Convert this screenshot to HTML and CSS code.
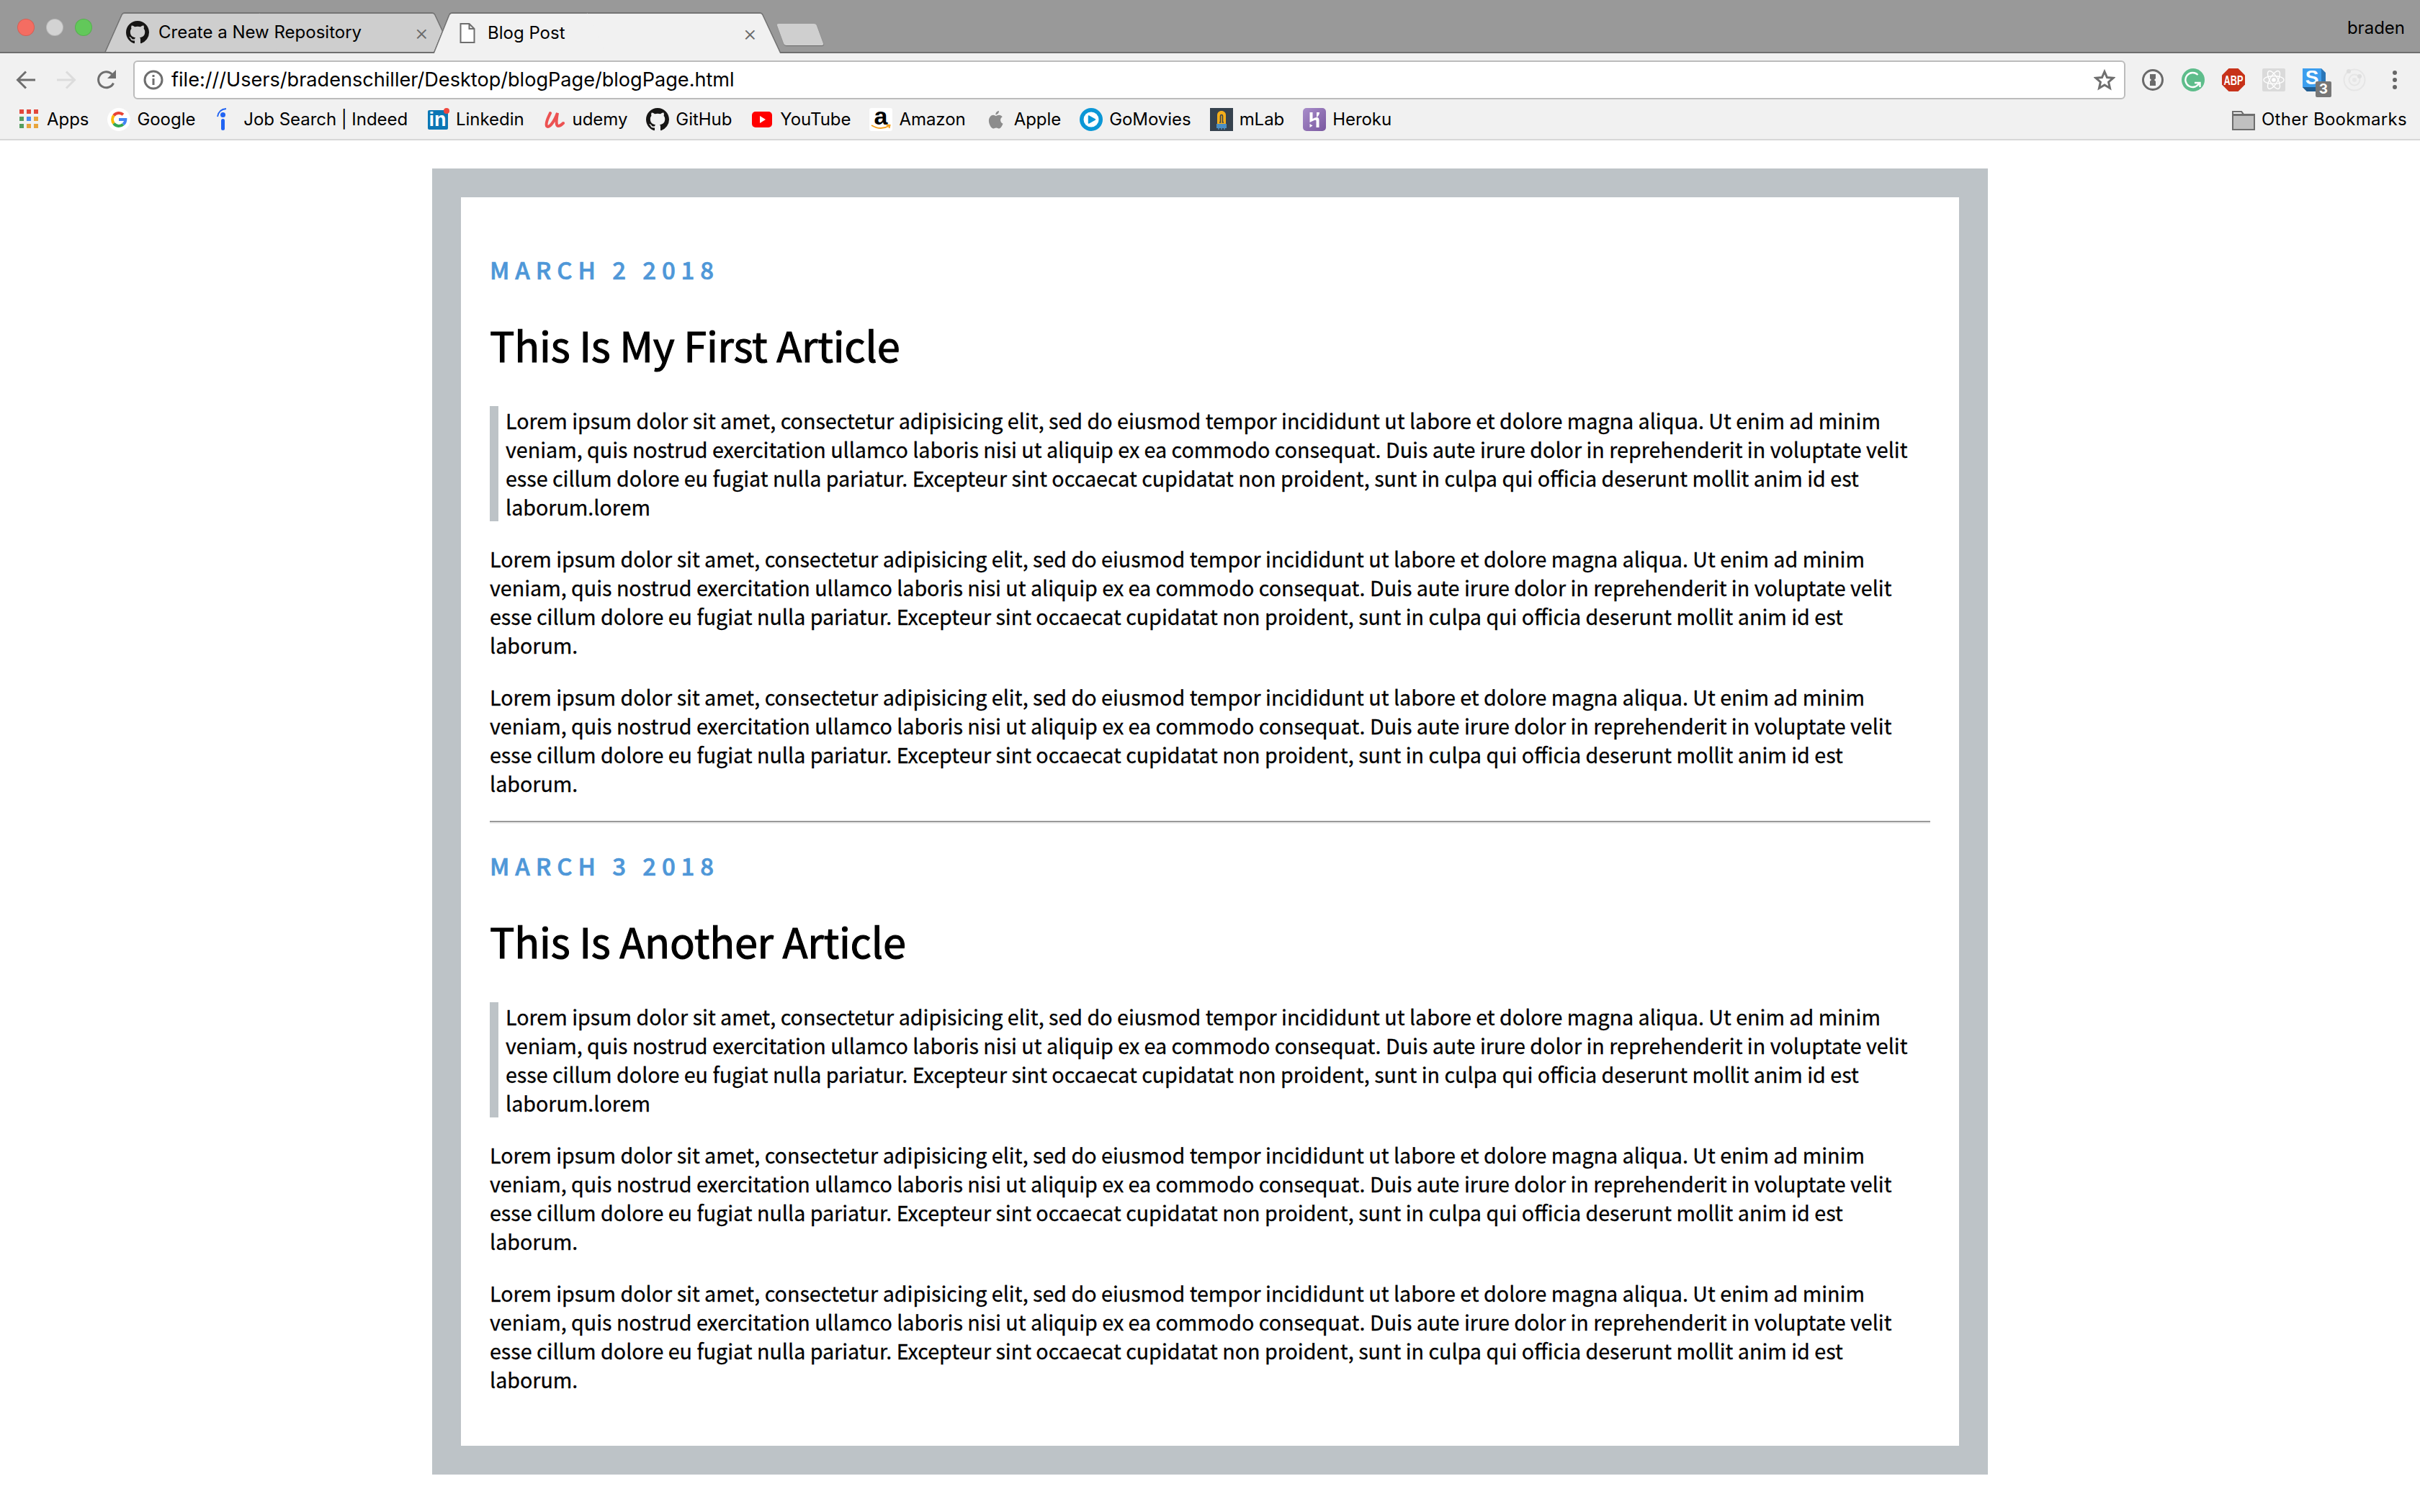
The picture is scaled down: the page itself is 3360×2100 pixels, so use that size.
FILE: index.html
```html
<!DOCTYPE html>
<html lang="en">
  <head>
    <meta charset="UTF-8" />
    <title>Blog Post</title>
    <link rel="stylesheet" href="styles.css">
  </head>
  <body>
    <svg class="defs" width="0" height="0">
      <defs>
        <linearGradient id="herokuFill" x1="0" y1="0" x2="1" y2="1">
          <stop offset="0" stop-color="#a88dca"/>
          <stop offset="1" stop-color="#79579f"/>
        </linearGradient>
      </defs>
      <symbol id="github" viewBox="0 0 16 16">
        <path fill="#161514" d="M8 0C3.58 0 0 3.58 0 8c0 3.54 2.29 6.53 5.47 7.59.4.07.55-.17.55-.38 0-.19-.01-.82-.01-1.49-2.01.37-2.53-.49-2.69-.94-.09-.23-.48-.94-.82-1.13-.28-.15-.68-.52-.01-.53.63-.01 1.08.58 1.23.82.72 1.21 1.87.87 2.33.66.07-.52.28-.87.51-1.07-1.78-.2-3.64-.89-3.64-3.95 0-.87.31-1.59.82-2.15-.08-.2-.36-1.02.08-2.12 0 0 .67-.21 2.2.82.64-.18 1.32-.27 2-.27.68 0 1.36.09 2 .27 1.53-1.04 2.2-.82 2.2-.82.44 1.1.16 1.92.08 2.12.51.56.82 1.27.82 2.15 0 3.07-1.87 3.75-3.65 3.95.29.25.54.73.54 1.48 0 1.07-.01 1.93-.01 2.2 0 .21.15.46.55.38A8.013 8.013 0 0016 8c0-4.42-3.58-8-8-8z"/>
      </symbol>
    </svg>

    <div class="browser">
      <div class="tabbar">
        <div class="lights">
          <span class="light red"></span>
          <span class="light grey"></span>
          <span class="light green"></span>
        </div>
        <div class="tab">
          <svg class="ico"><use href="#github"/></svg>
          <span class="tab-title">Create a New Repository</span>
          <span class="tab-close">×</span>
        </div>
        <div class="tab active">
          <svg class="ico doc" viewBox="0 0 22 28">
            <path fill="#fff" stroke="#6e6e6e" stroke-width="2" d="M1.5 1h12l7 7v19h-19zM13.5 1v7h7"/>
          </svg>
          <span class="tab-title">Blog Post</span>
          <span class="tab-close">×</span>
        </div>
        <div class="newtab"></div>
        <span class="user">braden</span>
      </div>

      <div class="toolbar">
        <svg class="nav" viewBox="0 0 28 28"><path fill="none" stroke="#6e6e6e" stroke-width="3" d="M27 14H3M14 2.500 2.500 14 14 25.500"/></svg>
        <svg class="nav" viewBox="0 0 28 28"><path fill="none" stroke="#dcdcdc" stroke-width="3" d="M1 14h24M14 2.500 25.500 14 14 25.500"/></svg>
        <svg class="nav" viewBox="0 0 28 28"><path fill="none" stroke="#6e6e6e" stroke-width="3" d="M23.500 18.500A11 11 0 1 1 21.500 6"/><path fill="#6e6e6e" d="M27 0v12H15z"/></svg>
        <div class="omnibox">
          <svg class="info" viewBox="0 0 28 28">
            <circle cx="14" cy="14" r="12" fill="none" stroke="#6e6e6e" stroke-width="3"/>
            <rect x="12.500" y="12" width="3" height="9" fill="#6e6e6e"/>
            <rect x="12.500" y="7" width="3" height="3" fill="#6e6e6e"/>
          </svg>
          <span class="url">file:///Users/bradenschiller/Desktop/blogPage/blogPage.html</span>
          <svg class="star" viewBox="0 0 30 30"><path fill="none" stroke="#6e6e6e" stroke-width="3" d="M15 3.500l3.500 8 8.500.8-6.400 5.700 1.900 8.500L15 22l-7.500 4.500 1.900-8.500L3 12.300l8.500-.8z"/></svg>
        </div>
        <div class="extensions">
          <svg class="ext" viewBox="0 0 32 32">
            <circle cx="16" cy="16" r="13.500" fill="#f4f4f4" stroke="#6a6a6a" stroke-width="3"/>
            <path fill="#6a6a6a" d="M12 8h8v6l-2 2 2 2v6h-8v-6l2-2-2-2z"/>
          </svg>
          <svg class="ext" viewBox="0 0 32 32">
            <circle cx="16" cy="16" r="16" fill="#5ebd8b"/>
            <path fill="none" stroke="#fff" stroke-width="2.400" d="M22.500 9A10 10 0 1 0 24.500 20"/>
            <path fill="none" stroke="#fff" stroke-width="2.400" d="M18 20h7.500v6"/>
          </svg>
          <svg class="ext" viewBox="0 0 32 32">
            <path fill="#c7321a" d="M9.500 0h13L32 9.500v13L22.500 32h-13L0 22.500v-13z"/>
            <text class="abp" x="2.500" y="22.500" textLength="27" lengthAdjust="spacingAndGlyphs">ABP</text>
          </svg>
          <svg class="ext" viewBox="0 0 32 32">
            <rect width="32" height="32" rx="2" fill="#dadada"/>
            <g fill="none" stroke="#fff" stroke-width="1.400">
              <ellipse cx="16" cy="16" rx="14" ry="5.500"/>
              <ellipse cx="16" cy="16" rx="14" ry="5.500" transform="rotate(60 16 16)"/>
              <ellipse cx="16" cy="16" rx="14" ry="5.500" transform="rotate(120 16 16)"/>
            </g>
            <circle cx="16" cy="16" r="2.800" fill="#fff"/>
          </svg>
          <div class="ext ext-stack">
            <svg class="ext" viewBox="0 0 32 32">
              <path fill="#2a76b8" d="M26 0l6 6v26H6l-6-6z"/>
              <path fill="#225e92" d="M0 26h26l6 6H6z"/>
              <rect width="26" height="26" fill="#3d9eee"/>
              <text class="slack-s" x="13" y="22" text-anchor="middle">S</text>
            </svg>
            <span class="badge">3</span>
          </div>
          <svg class="ext" viewBox="0 0 32 32">
            <g fill="none" stroke="#e6e6e6" stroke-width="2">
              <circle cx="16" cy="16" r="14.500"/>
              <circle cx="16" cy="16" r="7.500"/>
            </g>
            <circle cx="16" cy="16" r="3" fill="#e6e6e6"/>
            <circle cx="8" cy="4" r="3" fill="#dedede"/>
            <circle cx="23" cy="11" r="3" fill="#dedede"/>
          </svg>
          <div class="menu-dots"><i></i><i></i><i></i></div>
        </div>
      </div>

      <div class="bookmarks">
        <a class="bm">
          <svg class="ico" viewBox="0 0 32 32">
            <rect x="3" y="2" width="6" height="6" fill="#e2473b"/><rect x="13" y="2" width="6" height="6" fill="#e2473b"/><rect x="23" y="2" width="6" height="6" fill="#e2473b"/>
            <rect x="3" y="12" width="6" height="6" fill="#559e60"/><rect x="13" y="12" width="6" height="6" fill="#4a8cf0"/><rect x="23" y="12" width="6" height="6" fill="#e8a53c"/>
            <rect x="3" y="22" width="6" height="6" fill="#559e60"/><rect x="13" y="22" width="6" height="6" fill="#e8a53c"/><rect x="23" y="22" width="6" height="6" fill="#e8a53c"/>
          </svg>
          Apps
        </a>
        <a class="bm">
          <svg class="ico" viewBox="0 0 32 32">
            <circle cx="16" cy="16" r="16" fill="#fff"/>
            <path fill="none" stroke="#e94435" stroke-width="4" d="M9 10.500a9 9 0 0 1 13-1.200"/>
            <path fill="none" stroke="#fabb05" stroke-width="4" d="M9 10.500a9 9 0 0 0 0 11"/>
            <path fill="none" stroke="#34a853" stroke-width="4" d="M9 21.500a9 9 0 0 0 13 1.200"/>
            <path fill="none" stroke="#4285f4" stroke-width="4" d="M22 22.700c2.300-1.700 3.300-4.200 3.300-6.700H16"/>
          </svg>
          Google
        </a>
        <a class="bm">
          <svg class="ico" viewBox="0 0 32 32">
            <path fill="none" stroke="#2164f3" stroke-width="1.800" d="M5 12C6 6 10 1.500 17 1"/>
            <circle cx="12.500" cy="9.500" r="3.500" fill="#2164f3"/>
            <rect x="10" y="15" width="5" height="16" rx="2.500" fill="#2164f3"/>
          </svg>
          Job Search | Indeed
        </a>
        <a class="bm">
          <svg class="ico" viewBox="0 0 32 32">
            <rect x="2" y="3" width="28" height="27" rx="2" fill="#0b76b4"/>
            <text class="li" x="15.500" y="25" text-anchor="middle">in</text>
            <circle cx="28" cy="4" r="4" fill="#f0473e"/>
          </svg>
          Linkedin
        </a>
        <a class="bm">
          <svg class="ico" viewBox="0 0 32 32">
            <path fill="none" stroke="#ec5252" stroke-width="4" stroke-linecap="round" d="M10 7C8 12 3 20 5 25 8 29 15 20 20 7 19 13 17 25 21 25 24 25 26 23 28 21"/>
          </svg>
          udemy
        </a>
        <a class="bm">
          <svg class="ico"><use href="#github"/></svg>
          GitHub
        </a>
        <a class="bm">
          <svg class="ico" viewBox="0 0 32 32">
            <rect x="2" y="5" width="28" height="22" rx="5" fill="#f00"/>
            <path fill="#fff" d="M13 11l8 5-8 5z"/>
          </svg>
          YouTube
        </a>
        <a class="bm">
          <svg class="ico" viewBox="0 0 32 32">
            <rect width="32" height="32" rx="3" fill="#fff"/>
            <text class="amz" x="16" y="22.500" text-anchor="middle">a</text>
            <path fill="none" stroke="#f6a11d" stroke-width="2" d="M3 24c8 5 17 5 24 1M23.500 23.500l5 .5-1 4"/>
          </svg>
          Amazon
        </a>
        <a class="bm">
          <svg class="ico" viewBox="0 0 32 32">
            <path fill="#8c8c8c" transform="translate(1.500 3) scale(.88)" d="M21 1c.3 3-2.300 6-5.200 6-.4-2.900 2.300-5.700 5.200-6zM16 9c1.500 0 3-1.200 5.200-1.200 2 0 4 1 5.200 2.800-4.500 2.500-3.800 9 .9 10.700-1 2.700-3.500 7.700-6 7.700-1.800 0-2.500-1.200-4.600-1.200s-3 1.200-4.600 1.200C9 29 5 22 5 17c0-5.500 3.500-9.200 7-9.200 1.700 0 3 1.200 4 1.200z"/>
          </svg>
          Apple
        </a>
        <a class="bm">
          <svg class="ico" viewBox="0 0 32 32">
            <circle cx="16" cy="16" r="16" fill="#0b97d6"/>
            <circle cx="16" cy="16" r="10.500" fill="#fff"/>
            <path fill="#0b97d6" stroke="#0b97d6" stroke-width="1.500" stroke-linejoin="round" d="M12.500 11l9 5-9 5z"/>
          </svg>
          GoMovies
        </a>
        <a class="bm">
          <svg class="ico" viewBox="0 0 32 32">
            <rect width="32" height="32" fill="#36424e"/>
            <path fill="#f5ae1b" d="M10 22V10c0-3.500 2.500-6 6-6s6 2.500 6 6v12z"/>
            <path fill="none" stroke="#36424e" stroke-width="1.500" d="M13 20h1.500v-9c0-2 3-2 3 0v9H19"/>
            <rect x="9" y="22" width="14" height="6" fill="#4b8fc4"/>
            <path stroke="#4b8fc4" stroke-width="1.500" d="M12 28v2M16 28v2M20 28v2"/>
          </svg>
          mLab
        </a>
        <a class="bm">
          <svg class="ico" viewBox="0 0 32 32">
            <rect width="32" height="32" rx="5" fill="url(#herokuFill)"/>
            <path fill="#fff" d="M9.500 6h4v9c3-1.500 6-2.500 7.500-1.500 1.500 1 1.500 2.500 1.500 4V27h-4v-9c0-1-.5-1.500-1.500-1.300-1.500.3-3.500 1.300-3.500 1.300l-4 2zM9.500 27v-5l4 2.500zM19 6h4c0 3-1.500 5.500-4 7z"/>
          </svg>
          Heroku
        </a>
        <a class="bm other">
          <svg class="ico" viewBox="0 0 32 32">
            <path fill="#c0c0c0" stroke="#6e6e6e" stroke-width="2" d="M1 5h12l3 4h15v21H1z"/>
            <path fill="#f1f1f1" stroke="#6e6e6e" stroke-width="2" d="M1 9V5h12l3 4z"/>
            <path stroke="#6e6e6e" stroke-width="2" d="M1 10h30"/>
          </svg>
          Other Bookmarks
        </a>
      </div>
    </div>

    <main class="wrapper">
      <article class="post">
        <p class="post-date">March 2 2018</p>
        <h1 class="post-title">This Is My First Article</h1>
        <blockquote class="post-quote">Lorem ipsum dolor sit amet, consectetur adipisicing elit, sed do eiusmod tempor incididunt ut labore et dolore magna aliqua. Ut enim ad minim veniam, quis nostrud exercitation ullamco laboris nisi ut aliquip ex ea commodo consequat. Duis aute irure dolor in reprehenderit in voluptate velit esse cillum dolore eu fugiat nulla pariatur. Excepteur sint occaecat cupidatat non proident, sunt in culpa qui officia deserunt mollit anim id est laborum.lorem</blockquote>
        <p>Lorem ipsum dolor sit amet, consectetur adipisicing elit, sed do eiusmod tempor incididunt ut labore et dolore magna aliqua. Ut enim ad minim veniam, quis nostrud exercitation ullamco laboris nisi ut aliquip ex ea commodo consequat. Duis aute irure dolor in reprehenderit in voluptate velit esse cillum dolore eu fugiat nulla pariatur. Excepteur sint occaecat cupidatat non proident, sunt in culpa qui officia deserunt mollit anim id est laborum.</p>
        <p>Lorem ipsum dolor sit amet, consectetur adipisicing elit, sed do eiusmod tempor incididunt ut labore et dolore magna aliqua. Ut enim ad minim veniam, quis nostrud exercitation ullamco laboris nisi ut aliquip ex ea commodo consequat. Duis aute irure dolor in reprehenderit in voluptate velit esse cillum dolore eu fugiat nulla pariatur. Excepteur sint occaecat cupidatat non proident, sunt in culpa qui officia deserunt mollit anim id est laborum.</p>
      </article>
      <hr class="divider" />
      <article class="post">
        <p class="post-date">March 3 2018</p>
        <h1 class="post-title">This Is Another Article</h1>
        <blockquote class="post-quote">Lorem ipsum dolor sit amet, consectetur adipisicing elit, sed do eiusmod tempor incididunt ut labore et dolore magna aliqua. Ut enim ad minim veniam, quis nostrud exercitation ullamco laboris nisi ut aliquip ex ea commodo consequat. Duis aute irure dolor in reprehenderit in voluptate velit esse cillum dolore eu fugiat nulla pariatur. Excepteur sint occaecat cupidatat non proident, sunt in culpa qui officia deserunt mollit anim id est laborum.lorem</blockquote>
        <p>Lorem ipsum dolor sit amet, consectetur adipisicing elit, sed do eiusmod tempor incididunt ut labore et dolore magna aliqua. Ut enim ad minim veniam, quis nostrud exercitation ullamco laboris nisi ut aliquip ex ea commodo consequat. Duis aute irure dolor in reprehenderit in voluptate velit esse cillum dolore eu fugiat nulla pariatur. Excepteur sint occaecat cupidatat non proident, sunt in culpa qui officia deserunt mollit anim id est laborum.</p>
        <p>Lorem ipsum dolor sit amet, consectetur adipisicing elit, sed do eiusmod tempor incididunt ut labore et dolore magna aliqua. Ut enim ad minim veniam, quis nostrud exercitation ullamco laboris nisi ut aliquip ex ea commodo consequat. Duis aute irure dolor in reprehenderit in voluptate velit esse cillum dolore eu fugiat nulla pariatur. Excepteur sint occaecat cupidatat non proident, sunt in culpa qui officia deserunt mollit anim id est laborum.</p>
      </article>
    </main>
  </body>
</html>
```

FILE: styles.css
```css
* {
  box-sizing: border-box;
}

body {
  margin: 0;
  background: #fff;
  color: #000;
  font-family: 'Noto Sans CJK SC', 'Noto Sans', sans-serif;
  font-size: 28.65px;
  line-height: 40px;
  -webkit-text-stroke: 0.3px #000;
  overflow: hidden;
}

.defs {
  display: block;
  height: 0;
}

/* Browser chrome */
.browser {
  height: 195px;
  background: #f1f1f1;
  border-bottom: 2px solid #d8d8d8;
  font-family: 'Inter', sans-serif;
  font-size: 24px;
  line-height: 32px;
  color: #000;
  -webkit-text-stroke: 0;
}

.ico {
  width: 32px;
  height: 32px;
  flex: none;
  overflow: visible;
}

.tabbar {
  height: 74px;
  display: flex;
  align-items: flex-end;
  background: #999;
  border-bottom: 2px solid #6f6f6f;
  padding-left: 24px;
}

.lights {
  display: flex;
  gap: 16px;
  width: 121px;
  align-self: flex-start;
  padding-top: 26px;
}

.light {
  width: 24px;
  height: 24px;
  border-radius: 50%;
  border: 1px solid rgba(0, 0, 0, 0.12);
}
.light.red { background: #f46d62; }
.light.grey { background: #d3d3d3; }
.light.green { background: #62c85a; }

.tab {
  position: relative;
  width: 484px;
  height: 55px;
  display: flex;
  align-items: center;
  padding: 0 24px 0 30px;
}

.tab::before,
.tab::after {
  content: "";
  position: absolute;
  top: 0;
  bottom: 0;
  width: 50%;
  background: #cecece;
  border-top: 2px solid #747474;
  z-index: 0;
}
.tab::before {
  left: 0;
  border-left: 2px solid #747474;
  border-top-left-radius: 4px;
  transform: skewX(-24deg);
  transform-origin: bottom left;
}
.tab::after {
  right: 0;
  border-right: 2px solid #747474;
  border-top-right-radius: 4px;
  transform: skewX(25deg);
  transform-origin: bottom right;
}

.tab > * {
  position: relative;
  z-index: 1;
}

.tab.active {
  margin-left: -28px;
  margin-bottom: -2px;
  height: 57px;
  padding-left: 37px;
  z-index: 2;
}
.tab.active::before,
.tab.active::after {
  background: #f1f1f1;
}
.tab.active::before {
  transform: skewX(-22deg);
}

.tab-title {
  margin-left: 13px;
  flex: 1;
  white-space: nowrap;
}

.doc {
  width: 22px;
  height: 28px;
  margin-right: 4px;
}

.tab-close {
  color: #6a6a6a;
  font-size: 30px;
  font-weight: 300;
  line-height: 30px;
  margin-right: 10px;
}

.newtab {
  width: 55px;
  height: 30px;
  margin: 0 0 9px 4px;
  background: #cfcfcf;
  border-radius: 3px;
  transform: skewX(20deg);
  transform-origin: bottom left;
  box-shadow: 0 1px 1px rgba(0, 0, 0, 0.3);
}

.user {
  margin-left: auto;
  align-self: flex-start;
  padding: 23px 21px 0 0;
}

.toolbar {
  height: 64px;
  display: flex;
  align-items: center;
  padding: 9px 0 0 22px;
}

.nav {
  width: 28px;
  height: 28px;
  margin-right: 28px;
  flex: none;
}

.omnibox {
  width: 2766px;
  height: 54px;
  margin-left: -5px;
  display: flex;
  align-items: center;
  background: #fff;
  border: 2px solid #bcbcbc;
  border-radius: 6px;
  padding: 0 12px;
}

.info {
  width: 28px;
  height: 28px;
  flex: none;
}

.url {
  margin-left: 11px;
  font-size: 27.1px;
  flex: 1;
  white-space: nowrap;
}

.star {
  width: 30px;
  height: 30px;
  flex: none;
}

.extensions {
  display: flex;
  align-items: center;
  gap: 24px;
  margin-left: 22px;
}

.ext {
  display: block;
  width: 32px;
  height: 32px;
  flex: none;
  overflow: visible;
}

.ext-stack {
  position: relative;
}

.badge {
  position: absolute;
  left: 18px;
  top: 18px;
  width: 22px;
  height: 22px;
  background: #777;
  border-radius: 2px;
  color: #fff;
  font-size: 19px;
  font-weight: 700;
  line-height: 22px;
  text-align: center;
}

.menu-dots {
  display: flex;
  flex-direction: column;
  gap: 4px;
  margin-left: 13px;
}
.menu-dots i {
  width: 6px;
  height: 6px;
  border-radius: 50%;
  background: #666;
}

.abp {
  fill: #fff;
  font-size: 18px;
  font-weight: 700;
  font-family: 'Liberation Sans', sans-serif;
}
.slack-s {
  fill: #fff;
  font-size: 28px;
  font-weight: 700;
  font-family: 'Liberation Sans', sans-serif;
}
.li {
  fill: #fff;
  font-size: 27px;
  font-weight: 700;
  font-family: 'Liberation Sans', sans-serif;
}
.amz {
  fill: #000;
  font-size: 34px;
  font-weight: 700;
  font-family: 'Liberation Sans', sans-serif;
}

.bookmarks {
  height: 55px;
  display: flex;
  align-items: center;
  gap: 26px;
  padding: 0 18px 0 24px;
  letter-spacing: -0.05px;
}

.bm {
  display: flex;
  align-items: center;
  gap: 9px;
  white-space: nowrap;
}

.bm.other {
  margin-left: auto;
  letter-spacing: 0.3px;
}

/* Blog */
.wrapper {
  width: 2160px;
  margin: 39px auto 0;
  border: 40px solid #bdc3c7;
  padding: 77px 40px 40px;
}

.post-date {
  margin: 0;
  color: #4e97d8;
  -webkit-text-stroke: 0.7px #4e97d8;
  font-size: 33px;
  font-weight: 500;
  line-height: 46px;
  letter-spacing: 7.9px;
  text-transform: uppercase;
}

.post-title {
  margin: 41px 0 46px;
  font-size: 57.6px;
  line-height: 80px;
  font-weight: 400;
  letter-spacing: -0.2px;
  -webkit-text-stroke: 1.1px #000;
}

.post-quote {
  margin: 0 0 32px;
  border-left: 12px solid #bdc3c7;
  padding-left: 10px;
}

p {
  margin: 0 0 32px;
}

.divider {
  height: 4px;
  margin: 32px 0 35px;
  border: 0;
  border-top: 2px solid #9a9a9a;
  border-bottom: 2px solid #eee;
}
```
